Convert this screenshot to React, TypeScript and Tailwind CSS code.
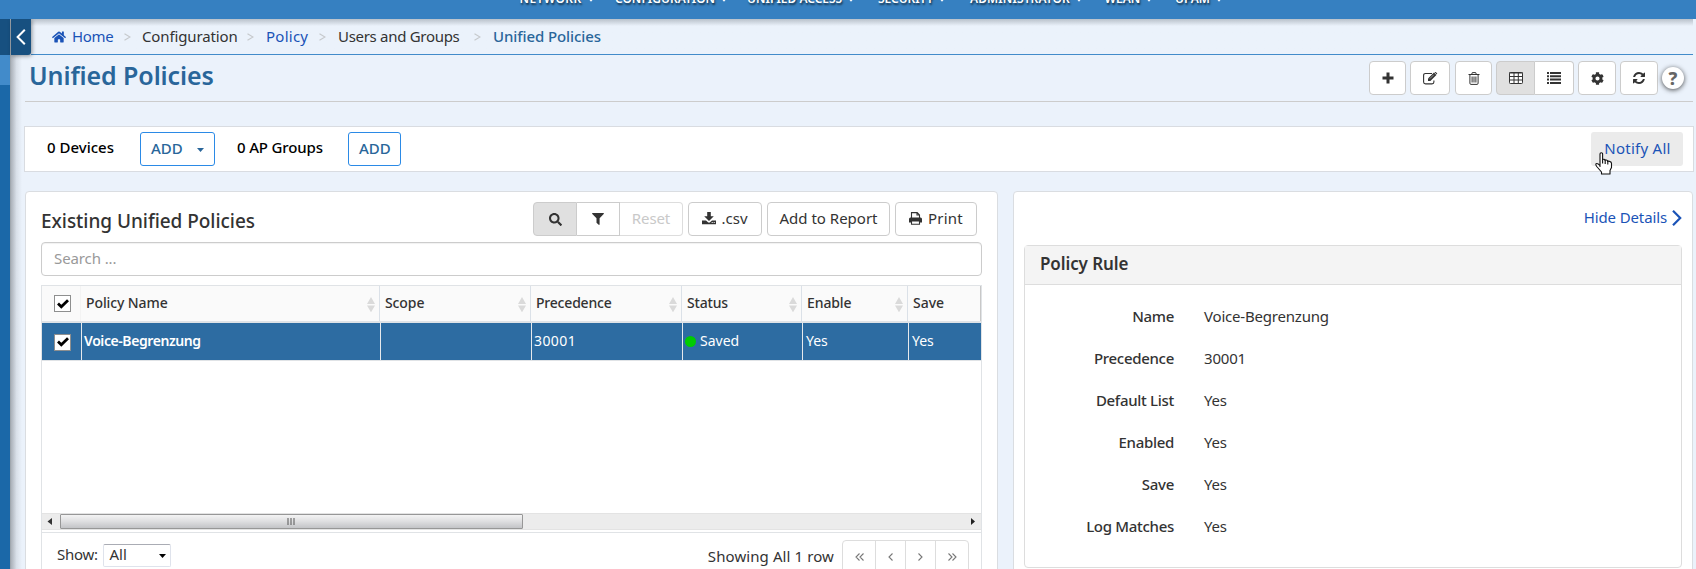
import React from 'react';
import type { ReactNode } from 'react';
import { FaCog, FaHome, FaSearch } from 'react-icons/fa';

const navItems = [
  { label: 'NETWORK', style: 'w-[95.5px] tracking-[0.4px]' },
  { label: 'CONFIGURATION', style: 'w-[132px] tracking-[0px]' },
  { label: 'UNIFIED ACCESS', style: 'w-[131px] tracking-[0px]' },
  { label: 'SECURITY', style: 'w-[92px] tracking-[-0.1px]' },
  { label: 'ADMINISTRATOR', style: 'w-[134.5px] tracking-[0.1px]' },
  { label: 'WLAN', style: 'w-[70.5px] tracking-[0.1px]' },
  { label: 'UPAM', style: 'w-[60px] tracking-[0px]' },
];

const columns = [
  { label: 'Policy Name', cell: 'w-[299px] pl-[5px] tracking-[-0.1px]', sortable: true },
  { label: 'Scope', cell: 'w-[151px] pl-[5px] tracking-[-0.1px]', sortable: true },
  { label: 'Precedence', cell: 'w-[151px] pl-[5px] tracking-[-0.2px]', sortable: true },
  { label: 'Status', cell: 'w-[120px] pl-[5px] tracking-[-0.2px]', sortable: true },
  { label: 'Enable', cell: 'w-[106px] pl-[5px] tracking-[-0.1px]', sortable: true },
  { label: 'Save', cell: 'flex-1 pl-[5px]', sortable: false },
];

const details = [
  { label: 'Name', value: 'Voice-Begrenzung' },
  { label: 'Precedence', value: '30001' },
  { label: 'Default List', value: 'Yes' },
  { label: 'Enabled', value: 'Yes' },
  { label: 'Save', value: 'Yes' },
  { label: 'Log Matches', value: 'Yes' },
];

const TrashIcon = () => (
  <svg width="12" height="13" viewBox="0 0 12 13" fill="none" stroke="currentColor">
    <path d="M0.5 2.5H11.5M3.7 2.3L4.3 0.6H7.7L8.3 2.3M1.9 2.5V11.2Q1.9 12.4 3 12.4H9Q10.1 12.4 10.1 11.2V2.5M4.1 4.5V10.5M6 4.5V10.5M7.9 4.5V10.5" />
  </svg>
);

const EditIcon = () => (
  <svg width="15" height="13" viewBox="0 0 15 13" fill="none" stroke="currentColor">
    <path d="M9 1.5H2.5Q0.6 1.5 0.6 3.4V10Q0.6 11.9 2.5 11.9H9Q10.9 11.9 10.9 10V8.4" strokeWidth="1.1" />
    <path d="M5 6.6L11 0.6L13.4 3L7.4 9H5Z" fill="currentColor" stroke="none" />
    <path d="M11.6 0.2L12.2 0Q12.6 -0.1 13 0.3L14 1.3Q14.3 1.7 14 2.1L13.7 2.5Z" fill="currentColor" stroke="none" />
    <path d="M6.9 6.6L10.8 2.7" stroke="#fff" strokeWidth="0.5" />
  </svg>
);

const TableIcon = () => (
  <svg width="14" height="12" viewBox="0 0 14 12" fill="none" stroke="currentColor">
    <rect x="0.5" y="0.5" width="13" height="11" rx="0.8" fill="#fff" />
    <path d="M0 1H14M0 4.5H14M0 8H14M5 1V12M9.3 1V12" />
  </svg>
);

const ListIcon = () => (
  <svg width="14" height="12" viewBox="0 0 14 12" fill="currentColor">
    <path d="M0 0H2V2H0ZM3 0H14V2H3ZM0 3.3H2V5.3H0ZM3 3.3H14V5.3H3ZM0 6.6H2V8.6H0ZM3 6.6H14V8.6H3ZM0 9.9H2V11.9H0ZM3 9.9H14V11.9H3Z" />
  </svg>
);

const RefreshIcon = () => (
  <svg width="12" height="12" viewBox="0 0 1536 1536" fill="currentColor">
    <path d="M1511 928q0 5-1 7-64 268-268 434.500T764 1536q-146 0-282.500-55T238 1324l-129 129q-19 19-45 19t-45-19-19-45V960q0-26 19-45t45-19h448q26 0 45 19t19 45-19 45l-137 137q71 66 161 102t187 36q134 0 250-65t186-179q11-17 53-117 8-23 30-23h192q13 0 22.500 9.500t9.500 22.500zM1536 128v448q0 26-19 45t-45 19h-448q-26 0-45-19t-19-45 19-45l138-138Q969 256 768 256q-134 0-250 65T332 500q-11 17-53 117-8 23-30 23H50q-13 0-22.500-9.500T18 608v-7q65-268 270-434.500T768 0q146 0 284 55.500T1297 212l130-129q19-19 45-19t45 19 19 45z" />
  </svg>
);

const DownloadIcon = () => (
  <svg width="14" height="13" viewBox="0 0 14 13" fill="currentColor">
    <path d="M5.2 0H8.8V4.3H11.8L7 9L2.200 4.300H5.200Z" />
    <path d="M0 8.400H4L6 10.300Q7 11 8 10.300L10 8.400H14V12.300H0Z" />
    <path d="M9.700 10.500H10.700M11.700 10.500H12.700" stroke="#fff" />
  </svg>
);

const PrintIcon = () => (
  <svg width="13" height="13" viewBox="0 0 13 13" fill="none" stroke="currentColor" strokeWidth="1.100">
    <path d="M2.500 6V0.600H8.200L10.500 2.900V6M8 0.600V3H10.500" />
    <path d="M0 7Q0 5.500 1.500 5.500H11.500Q13 5.500 13 7V10.500H10.500V9H2.500V10.500H0Z" fill="currentColor" stroke="none" />
    <path d="M2.500 9V12.300H10.500V9Z" fill="#fff" />
  </svg>
);

const FilterIcon = () => (
  <svg width="12" height="12" viewBox="0 0 12 12" fill="currentColor">
    <path d="M0.500 0H11.500Q12.200 0.400 11.700 1L7.600 5.200V11.500Q7.300 12.200 6.700 11.800L4.500 9.700V5.200L0.300 1Q-0.200 0.400 0.500 0Z" />
  </svg>
);

const Caret = ({ className }: { className: string }) => (
  <svg className={className} width="7" height="4" viewBox="0 0 7 4" fill="currentColor">
    <path d="M0 0H7L3.500 4Z" />
  </svg>
);

const SortIcon = () => (
  <svg className="mr-[4px] mt-[3px]" width="8" height="15" viewBox="0 0 8 15" fill="#dadada">
    <path d="M4 0L8 7H0ZM0 8.500H8L4 15.300Z" />
  </svg>
);

const Checkbox = () => (
  <span className="flex h-[17px] w-[17px] items-center justify-center border border-[#8e8f8f] bg-white">
    <svg width="12" height="10" viewBox="0 0 12 10" fill="none" stroke="#000" strokeWidth="2.800">
      <path d="M1 4.600L4.300 7.800L11 1.300" />
    </svg>
  </span>
);

function Button({ className, active = false, children }: { className: string; active?: boolean; children: ReactNode }) {
  return (
    <button className={`flex h-[34px] shrink-0 items-center justify-center rounded-[4px] border border-[#ccc] ${active ? 'bg-[#e0e0e0]' : 'bg-white'} ${className}`}>
      {children}
    </button>
  );
}

function TopBar() {
  return (
    <header className="relative z-20 h-[19px] w-full shrink-0 overflow-hidden bg-[#3680c1]">
      <nav className="-mt-[11px] ml-[519.5px] flex h-[20px] text-[12px] leading-[20px] font-semibold text-white [text-shadow:1px_2px_2px_rgba(0,0,0,0.6)]">
        {navItems.map((item) => (
          <span key={item.label} className={`flex shrink-0 items-center whitespace-nowrap ${item.style}`}>
            {item.label}
            <Caret className="mt-[2px] ml-[6px] w-[6px]" />
          </span>
        ))}
      </nav>
    </header>
  );
}

const Separator = () => (
  <svg className="mt-[2px] -ml-[1px]" width="7" height="8" viewBox="0 0 7 8" fill="none" stroke="#c6c9cc" strokeWidth="1.200">
    <path d="M0.500 0.800L6 4L0.500 7.200" />
  </svg>
);

function Breadcrumb() {
  return (
    <div className="flex h-[36px] shrink-0">
      <button className="z-10 flex h-[36px] w-[20px] shrink-0 items-center justify-center rounded-br-[3px] bg-[#175080] shadow-[1px_1px_4px_rgba(0,0,0,0.4)]">
        <svg width="10" height="16" viewBox="0 0 10 16" fill="none" stroke="#fff" strokeWidth="2">
          <path d="M8.800 0.700L1.600 8L8.800 15.300" />
        </svg>
      </button>
      <div className="mr-[3px] flex flex-1 items-center border-b border-[#428bca] bg-linear-to-b from-[#b9c1ca] via-[#ebf2fb] via-[7px] to-[#ebf2fb] pb-[2px] whitespace-nowrap">
        <FaHome className="mt-[2px] ml-[21px] shrink-0 text-[14px] text-[#1a53b7]" />
        <span className="ml-[6px] w-[53px] tracking-[-0.350px] text-[#1a53b7]">Home</span>
        <Separator />
        <span className="ml-[11px] w-[106px] tracking-[-0.130px]">Configuration</span>
        <Separator />
        <span className="ml-[12px] w-[54px] tracking-[0.250px] text-[#1a53b7]">Policy</span>
        <Separator />
        <span className="ml-[12px] w-[137px] tracking-[-0.300px]">Users and Groups</span>
        <Separator />
        <span className="ml-[12px] font-medium tracking-[-0.100px] text-[#29669a]">Unified Policies</span>
      </div>
    </div>
  );
}

function TitleRow() {
  return (
    <div className="mr-[3px] ml-[14px] flex h-[47px] shrink-0 items-center border-b border-[#ccc] pl-[4px]">
      <h1 className="flex-1 pb-[6px] text-[25px] leading-[30px] font-semibold tracking-[-0.100px] text-[#29669a]">Unified Policies</h1>
      <Button className="w-[37px]">
        <svg width="12" height="12" viewBox="0 0 12 12" fill="currentColor">
          <path d="M4.500 0.500H7.500V4.500H11.500V7.500H7.500V11.500H4.500V7.500H0.500V4.500H4.500Z" />
        </svg>
      </Button>
      <Button className="ml-[4px] w-[40px]"><EditIcon /></Button>
      <Button className="ml-[5px] w-[37px]"><TrashIcon /></Button>
      <Button active className="ml-[4px] w-[39px] rounded-r-none"><TableIcon /></Button>
      <Button className="w-[39px] rounded-l-none border-l-0"><ListIcon /></Button>
      <Button className="ml-[4px] w-[38px]"><FaCog className="text-[13px]" /></Button>
      <Button className="ml-[4px] w-[38px]"><RefreshIcon /></Button>
      <button className="mr-[9px] ml-[4px] flex h-[22px] w-[22px] items-center justify-center rounded-full bg-white text-[18px] leading-none font-extrabold text-[#666] shadow-[0_1px_5px_rgba(0,0,0,0.7)]">?</button>
    </div>
  );
}

function DeviceBar() {
  return (
    <div className="relative mt-[24px] mr-[2px] ml-[13px] flex h-[46px] shrink-0 items-center border border-[#d9dce1] bg-white font-medium">
      <span className="ml-[22px] w-[93px] pb-[4px] text-black">0 Devices</span>
      <button className="flex h-[34px] w-[75px] items-center rounded-[3px] border border-[#2b8ae6] pb-[3px] pl-[10px] font-medium text-[#29669a]">
        ADD
        <Caret className="mt-[5px] ml-[14px]" />
      </button>
      <span className="ml-[22px] w-[111px] pb-[4px] tracking-[-0.150px] text-black">0 AP Groups</span>
      <button className="flex h-[34px] w-[53px] items-center rounded-[3px] border border-[#2b8ae6] pb-[3px] pl-[10px] font-medium text-[#29669a]">ADD</button>
      <button className="mr-[10px] ml-auto h-[34px] w-[92px] rounded-[3px] bg-[#ebebeb] pb-[3px] pl-[1px] font-normal tracking-[0.250px] text-[#1a53b7]">Notify All</button>
      <svg className="absolute top-[25px] right-[80px]" width="18" height="23" viewBox="0 0 18 23" fill="#fff" stroke="#111" strokeWidth="1.100" strokeLinejoin="round">
        <path d="M5 14.500V2Q5 0.700 6.300 0.700T7.600 2V7.600Q8.500 6.800 10 7.600V8.400Q11.300 7.600 12.600 8.600V9.400Q13.800 8.700 15 9.600Q16.500 9.800 16.500 11.500V15.500L15 18.500V22H6.500V20L1.700 14.500Q0.300 12.500 1.200 11.600Q2.500 10.800 5 13.700Z" />
        <path d="M7.600 7.600V11.500M10.200 8.300V12M12.800 9.300V12.500" fill="none" />
      </svg>
    </div>
  );
}

function PolicyTable() {
  return (
    <div className="flex h-[247px] shrink-0 flex-col border-x border-t border-[#e0e3e6] text-[14px]">
      <div className="flex h-[37px] shrink-0 border-b-2 border-[#dfe3e7] bg-[#fafafa] font-medium">
        <div className="flex w-[39px] shrink-0 items-center border-r border-[#f3f3f3] pl-[12px]"><Checkbox /></div>
        {columns.map((column) => (
          <div key={column.label} className={`flex shrink-0 items-center justify-between border-r border-[#dbe1e8] pb-[2px] last:border-[#c8c8c8] ${column.cell}`}>
            {column.label}
            {column.sortable && <SortIcon />}
          </div>
        ))}
      </div>
      <div className="flex h-[38px] shrink-0 border-b border-[#e0e3e6] bg-[#2d6ca2] text-white">
        <div className="flex w-[40px] shrink-0 items-center border-r border-[#e6e9ec] pt-[1px] pl-[12px]"><Checkbox /></div>
        <div className="flex w-[299px] shrink-0 items-center border-r border-[#e6e9ec] pb-[1px] pl-[2px] font-semibold tracking-[-0.420px]">Voice-Begrenzung</div>
        <div className="w-[151px] shrink-0 border-r border-[#e6e9ec]" />
        <div className="flex w-[151px] shrink-0 items-center border-r border-[#e6e9ec] pb-[1px] pl-[2px] tracking-[0.400px]">30001</div>
        <div className="flex w-[120px] shrink-0 items-center border-r border-[#e6e9ec] pb-[1px] pl-[2px]">
          <span className="mt-[1px] mr-[4px] h-[11px] w-[11px] rounded-full bg-[#00cc00]" />
          Saved
        </div>
        <div className="flex w-[106px] shrink-0 items-center border-r border-[#e6e9ec] pb-[1px] pl-[3px]">Yes</div>
        <div className="flex flex-1 items-center pb-[1px] pl-[3px]">Yes</div>
      </div>
      <div className="flex-1" />
      <div className="flex h-[17px] shrink-0 items-center border-y border-[#e3e3e3] bg-[#ececec]">
        <svg className="ml-[5px]" width="5" height="7" viewBox="0 0 5 7" fill="#333"><path d="M5 0V7L0.500 3.500Z" /></svg>
        <div className="ml-[8px] flex h-[15px] w-[463px] items-center justify-center rounded-[1px] border border-[#979797] bg-linear-to-b from-[#f4f4f4] via-[#dedee0] to-[#c3c4c7] pr-[2px]">
          <svg width="8" height="7" viewBox="0 0 8 7" stroke="#555"><path d="M1 0V7M4 0V7M7 0V7" /></svg>
        </div>
        <svg className="mr-[6px] ml-auto" width="4" height="7" viewBox="0 0 4 7" fill="#222"><path d="M0 0V7L4 3.500Z" /></svg>
      </div>
      <div className="h-[2px] shrink-0" />
    </div>
  );
}

const Chevrons = ({ d }: { d: string }) => (
  <svg width="9" height="8" viewBox="0 0 9 8" fill="none" stroke="#777" strokeWidth="1.100"><path d={d} /></svg>
);

function TableFooter() {
  return (
    <div className="flex h-[60px] shrink-0 border border-[#e0e3e6]">
      <span className="mt-[11px] ml-[15px] w-[45.500px] leading-[20px] tracking-[-0.250px]">Show:</span>
      <div className="mt-[11px] flex h-[23px] w-[68px] items-center rounded-[2px] border border-[#dfe3ec] border-t-[#aaacb4] pb-[3px] pl-[6px]">
        All
        <Caret className="mt-[4px] mr-[4px] ml-auto text-black" />
      </div>
      <span className="mt-[13px] mr-[8px] ml-auto leading-[20px] tracking-[0.100px]">Showing All 1 row</span>
      <div className="mt-[7px] mr-[12px] flex h-[34px] rounded-[4px] border border-[#ddd]">
        <span className="flex w-[33px] items-center justify-center border-r border-[#ddd]"><Chevrons d="M4.500 0.500L1 4L4.500 7.500M8.500 0.500L5 4L8.500 7.500" /></span>
        <span className="flex w-[30px] items-center justify-center border-r border-[#ddd]"><Chevrons d="M6.500 0.500L3 4L6.500 7.500" /></span>
        <span className="flex w-[30px] items-center justify-center border-r border-[#ddd]"><Chevrons d="M2.500 0.500L6 4L2.500 7.500" /></span>
        <span className="flex w-[32px] items-center justify-center"><Chevrons d="M0.500 0.500L4 4L0.500 7.500M4.500 0.500L8 4L4.500 7.500" /></span>
      </div>
    </div>
  );
}

function PoliciesPanel() {
  return (
    <section className="flex w-[973px] shrink-0 flex-col rounded-t-[4px] border border-[#dadde1] bg-white px-[15px]">
      <div className="mt-[10px] flex h-[34px] shrink-0">
        <h2 className="flex-1 pt-[5px] text-[19px] leading-[28px] font-medium tracking-[-0.040px]">Existing Unified Policies</h2>
        <Button active className="w-[44px] rounded-r-none"><FaSearch className="text-[13px]" /></Button>
        <Button className="w-[43px] rounded-none border-l-0"><FilterIcon /></Button>
        <Button className="w-[63px] rounded-l-none border-l-0 border-[#ddd] pb-[2px] tracking-[-0.100px] text-[#c9c9c9]">Reset</Button>
        <Button className="ml-[5px] w-[74px] gap-[5px] pb-[2px]"><DownloadIcon /><span>.csv</span></Button>
        <Button className="ml-[5px] w-[123px] pb-[2px]">Add to Report</Button>
        <Button className="mr-[5px] ml-[5px] w-[82px] gap-[6px] pb-[2px]"><PrintIcon /><span className="tracking-[0.200px]">Print</span></Button>
      </div>
      <div className="mt-[6px] mb-[9px] flex h-[34px] shrink-0 items-center rounded-[4px] border border-[#ccc] pb-[3px] pl-[12px] tracking-[-0.100px] text-[#999] shadow-[inset_0_1px_1px_rgba(0,0,0,0.06)]">Search ...</div>
      <PolicyTable />
      <TableFooter />
    </section>
  );
}

function DetailsPanel() {
  return (
    <section className="mr-[3px] ml-[15px] flex flex-1 flex-col rounded-t-[4px] border border-[#dadde1] bg-white px-[10px]">
      <a className="mt-[14px] flex h-[22px] shrink-0 items-center justify-end tracking-[-0.120px] text-[#1a53b7]">
        Hide Details
        <svg className="mt-[2px] ml-[5px]" width="10" height="16" viewBox="0 0 10 16" fill="none" stroke="currentColor" strokeWidth="2.200"><path d="M1 0.800L8.200 8L1 15.200" /></svg>
      </a>
      <div className="mt-[17px] flex h-[323px] shrink-0 flex-col rounded-[4px] border border-[#ddd]">
        <h3 className="h-[39px] shrink-0 border-b border-[#ddd] bg-[#f4f4f4] pl-[15px] text-[17px] leading-[36px] font-semibold tracking-[-0.100px]">Policy Rule</h3>
        <dl className="mt-[10px]">
          {details.map((row) => (
            <div key={row.label} className="flex h-[42px] items-center">
              <dt className="w-[149px] text-right font-medium tracking-[-0.300px]">{row.label}</dt>
              <dd className="ml-[30px] tracking-[-0.200px]">{row.value}</dd>
            </div>
          ))}
        </dl>
      </div>
    </section>
  );
}

export default function App() {
  return (
    <div className="flex h-[569px] w-[1696px] flex-col overflow-hidden bg-[#ebf2fb] font-['Noto_Sans',sans-serif] text-[15px] leading-[20px] text-[#333]">
      <TopBar />
      <div className="flex h-[550px] shrink-0">
        <aside className="flex w-[10px] shrink-0 flex-col bg-[#1b68a8]">
          <div className="h-[36px] bg-[#175080]" />
          <div className="h-[30px] bg-[#428bca]" />
        </aside>
        <main className="relative flex flex-1 flex-col border-l border-[#a0a7ae]">
          <div className="absolute top-[36px] bottom-0 left-0 w-[11px] bg-linear-to-r from-[#abb1b9] via-[#d9e0e9] to-[#ebf2fb]" />
          <Breadcrumb />
          <TitleRow />
          <DeviceBar />
          <div className="mt-[19px] ml-[14px] flex h-[400px] shrink-0">
            <PoliciesPanel />
            <DetailsPanel />
          </div>
        </main>
      </div>
    </div>
  );
}
